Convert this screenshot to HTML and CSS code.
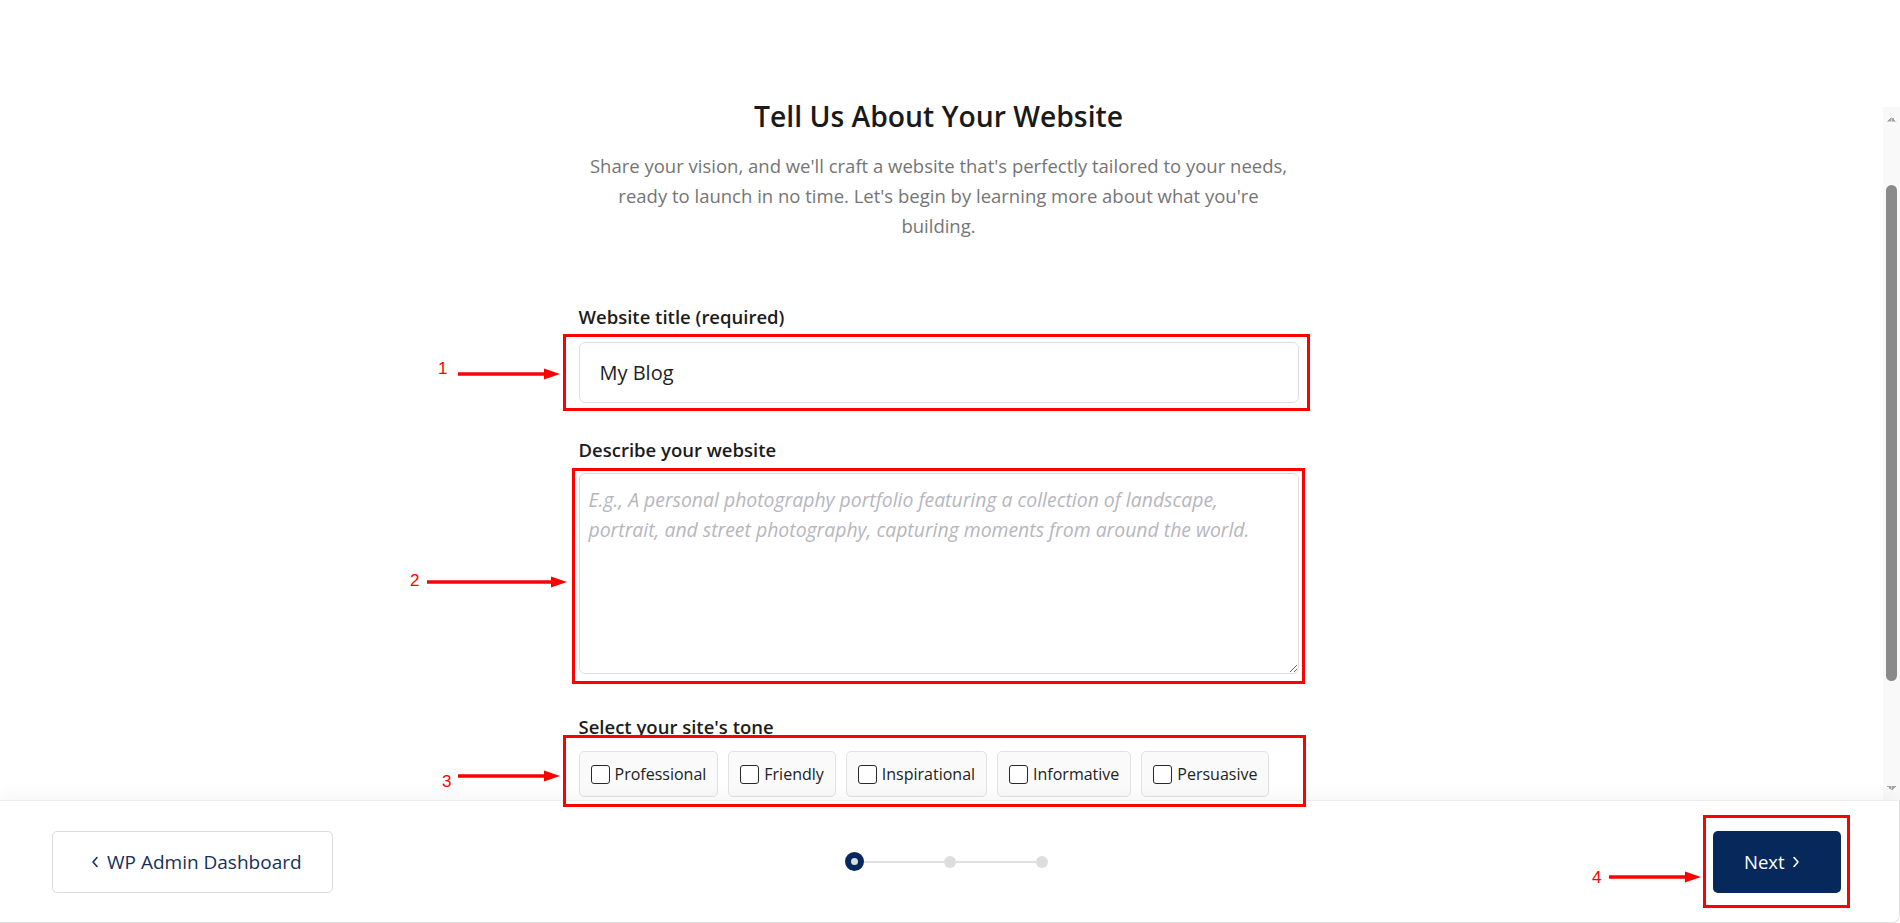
FILE: index.html
```html
<!DOCTYPE html>
<html lang="en">
<head>
<meta charset="utf-8">
<title>Tell Us About Your Website</title>
<link rel="stylesheet" href="styles.css">
</head>
<body>
<div class="app">
  <div class="main">
    <main class="page">
      <div class="content">
        <h1 class="title">Tell Us About Your Website</h1>
        <p class="lead">Share your vision, and we'll craft a website that's perfectly tailored to your needs, ready to launch in no time. Let's begin by learning more about what you're building.</p>

        <form class="form">
          <div class="field">
            <label class="label" for="site-title">Website title (required)</label>
            <input class="input" id="site-title" type="text" value="My Blog">
          </div>

          <div class="field field-desc">
            <label class="label" for="site-desc">Describe your website</label>
            <textarea class="textarea" id="site-desc" placeholder="E.g., A personal photography portfolio featuring a collection of landscape, portrait, and street photography, capturing moments from around the world."></textarea>
          </div>

          <div class="field field-tone">
            <span class="label">Select your site's tone</span>
            <div class="tones">
              <label class="tone"><input type="checkbox" class="check"><span>Professional</span></label>
              <label class="tone"><input type="checkbox" class="check"><span>Friendly</span></label>
              <label class="tone"><input type="checkbox" class="check"><span>Inspirational</span></label>
              <label class="tone"><input type="checkbox" class="check"><span>Informative</span></label>
              <label class="tone"><input type="checkbox" class="check"><span>Persuasive</span></label>
            </div>
          </div>
        </form>
      </div>
    </main>

    <div class="vscroll" aria-hidden="true">
      <div class="sb-btn sb-up"></div>
      <div class="sb-track"><div class="sb-thumb"></div></div>
      <div class="sb-btn sb-down"></div>
    </div>
  </div>

  <footer class="footer">
    <div class="footer-left">
      <button class="btn-back" type="button">
        <svg class="chev" width="10" height="14" viewBox="0 0 10 14"><polyline points="7,2.5 3,7 7,11.5" fill="none" stroke="currentColor" stroke-width="1.6" stroke-linecap="round" stroke-linejoin="round"/></svg>
        <span>WP Admin Dashboard</span>
      </button>
    </div>
    <div class="stepper">
      <span class="dot dot-active"></span>
      <span class="step-line"></span>
      <span class="dot"></span>
      <span class="step-line"></span>
      <span class="dot"></span>
    </div>
    <div class="footer-right">
      <button class="btn-next" type="button">
        <span>Next</span>
        <svg class="chev" width="10" height="14" viewBox="0 0 10 14"><polyline points="3,2.5 7,7 3,11.5" fill="none" stroke="currentColor" stroke-width="1.6" stroke-linecap="round" stroke-linejoin="round"/></svg>
      </button>
    </div>
  </footer>

  <div class="annot-box box-1"></div>
  <div class="annot-box box-2"></div>
  <div class="annot-box box-3"></div>
  <div class="annot-box box-4"></div>

  <svg class="arrow arrow-1" width="102" height="12" viewBox="0 0 102 12"><line x1="0" y1="6" x2="88" y2="6" stroke="#f00" stroke-width="3.5"/><polygon points="86,0.5 102,6 86,11.5" fill="#f00"/></svg>
  <svg class="arrow arrow-2" width="140" height="12" viewBox="0 0 140 12"><line x1="0" y1="6" x2="126" y2="6" stroke="#f00" stroke-width="3.5"/><polygon points="124,0.5 140,6 124,11.5" fill="#f00"/></svg>
  <svg class="arrow arrow-3" width="102" height="12" viewBox="0 0 102 12"><line x1="0" y1="6" x2="88" y2="6" stroke="#f00" stroke-width="3.5"/><polygon points="86,0.5 102,6 86,11.5" fill="#f00"/></svg>
  <svg class="arrow arrow-4" width="92" height="12" viewBox="0 0 92 12"><line x1="0" y1="6" x2="78" y2="6" stroke="#f00" stroke-width="3.5"/><polygon points="76,0.5 92,6 76,11.5" fill="#f00"/></svg>

  <span class="annot-num num-1">1</span>
  <span class="annot-num num-2">2</span>
  <span class="annot-num num-3">3</span>
  <span class="annot-num num-4">4</span>
</div>
</body>
</html>
```

FILE: styles.css
```css
* { box-sizing: border-box; }

html, body {
  margin: 0;
  padding: 0;
  height: 100%;
  overflow: hidden;
  background: #ffffff;
}

body {
  font-family: "Open Sans", "Noto Sans", "Liberation Sans", sans-serif;
  color: #1c1c1c;
}

.app {
  position: relative;
  height: 923px;
  display: flex;
  flex-direction: column;
}

.main {
  flex: 0 0 800px;
  height: 800px;
  display: flex;
  background: #ffffff;
}

.page {
  flex: 1 1 auto;
  overflow: hidden;
}

/* scrollbar column */
.vscroll {
  width: 17px;
  flex: 0 0 17px;
  margin-top: 107px;
  display: flex;
  flex-direction: column;
  background: #f9f9f9;
}

.sb-btn {
  height: 17px;
  flex: 0 0 17px;
  background-repeat: no-repeat;
  background-size: 4.5px 4.5px;
}

.sb-up {
  background-image:
    linear-gradient(to bottom right, transparent 50%, #a3a3a3 50%),
    linear-gradient(to bottom left, transparent 50%, #a3a3a3 50%);
  background-position: 4px 10px, 8.5px 10px;
}

.sb-down {
  background-image:
    linear-gradient(to top right, transparent 50%, #a3a3a3 50%),
    linear-gradient(to top left, transparent 50%, #a3a3a3 50%);
  background-position: 4px 3px, 8.5px 3px;
}

.sb-track {
  flex: 1 1 auto;
  padding: 0 3px;
}

.sb-thumb {
  margin-top: 61px;
  height: 496px;
  border-radius: 6px;
  background: #8a8a8a;
}

.content {
  padding: 97px 6px 0 0;
  display: flex;
  flex-direction: column;
  align-items: center;
}

.title {
  margin: 0;
  font-size: 28.3px;
  line-height: 38px;
  font-weight: 600;
  color: #1a1a1a;
  text-align: center;
}

.lead {
  margin: 16px 0 0;
  max-width: 708px;
  font-size: 18.5px;
  line-height: 30px;
  color: #757575;
  text-align: center;
}

.form {
  width: 720px;
  margin-top: 64px;
  display: flex;
  flex-direction: column;
}

.field {
  display: flex;
  flex-direction: column;
}

.field-desc { margin-top: 35px; }
.field-tone { margin-top: 41px; }

.label {
  font-size: 18.5px;
  line-height: 24px;
  font-weight: 600;
  color: #1c1c1c;
}

.input {
  margin-top: 13px;
  height: 61px;
  padding: 0 20px;
  border: 1px solid #dedede;
  border-radius: 6px;
  font-family: inherit;
  font-size: 20px;
  color: #1e1e1e;
  background: #ffffff;
  outline: none;
}

.textarea {
  margin-top: 11px;
  height: 201px;
  padding: 11px 29px 10px 9px;
  border: 1px solid #dedede;
  border-radius: 6px;
  font-family: inherit;
  font-size: 19.4px;
  line-height: 30px;
  color: #1e1e1e;
  background: #ffffff;
  outline: none;
}

.textarea::placeholder {
  font-style: italic;
  color: #b6b6bd;
}

.tones {
  margin-top: 12px;
  display: flex;
  gap: 10px;
}

.tone {
  height: 46px;
  padding: 0 11px;
  display: flex;
  align-items: center;
  gap: 5px;
  border: 1px solid #e2e2e2;
  border-radius: 5px;
  background: #fafafa;
  font-size: 16px;
  color: #222222;
}

.check {
  appearance: none;
  -webkit-appearance: none;
  margin: 0;
  width: 19px;
  height: 19px;
  border: 1.5px solid #2a2a2a;
  border-radius: 3px;
  background: #ffffff;
}

/* footer */
.footer {
  position: relative;
  z-index: 1;
  flex: 0 0 123px;
  height: 123px;
  display: grid;
  grid-template-columns: 1fr auto 1fr;
  align-items: center;
  padding: 0 58px 0 52px;
  background: #ffffff;
  border-top: 1px solid #ededed;
  border-bottom: 1px solid #e2e2e2;
  border-right: 1px solid #e2e2e2;
  border-bottom-right-radius: 8px;
  box-shadow: 0 -6px 16px rgba(0, 0, 0, 0.035);
}

.footer-left { display: flex; justify-content: flex-start; }
.footer-right { display: flex; justify-content: flex-end; }

.btn-back {
  width: 281px;
  height: 62px;
  padding: 0 0 0 37px;
  display: flex;
  align-items: center;
  gap: 7px;
  border: 1px solid #dcdcdc;
  border-radius: 5px;
  background: #ffffff;
  color: #15305c;
  font-family: inherit;
  font-size: 19px;
}

.btn-next {
  width: 128px;
  height: 62px;
  padding: 0 0 0 31px;
  display: flex;
  align-items: center;
  gap: 6px;
  border: none;
  border-radius: 5px;
  background: #06285a;
  color: #ffffff;
  font-family: inherit;
  font-size: 18.5px;
  font-weight: 500;
}

.chev { display: block; }

.stepper {
  display: flex;
  align-items: center;
}

.dot {
  width: 12px;
  height: 12px;
  border-radius: 50%;
  background: #dddddd;
}

.dot-active {
  width: 19px;
  height: 19px;
  border: 6px solid #06285a;
  background: #d9dde4;
}

.step-line {
  width: 80px;
  height: 2px;
  background: #e0e0e0;
}

/* screenshot annotations (overlay) */
.annot-box {
  position: absolute;
  border: 3px solid #ff0000;
  pointer-events: none;
  z-index: 5;
}
.box-1 { left: 563px; top: 334px; width: 747px; height: 77px; }
.box-2 { left: 572px; top: 468px; width: 733px; height: 216px; }
.box-3 { left: 563px; top: 735px; width: 743px; height: 72px; }
.box-4 { left: 1703px; top: 815px; width: 147px; height: 93px; }

.arrow {
  position: absolute;
  z-index: 5;
}
.arrow-1 { left: 458px; top: 368px; }
.arrow-2 { left: 427px; top: 576px; }
.arrow-3 { left: 458px; top: 770px; }
.arrow-4 { left: 1609px; top: 871px; }

.annot-num {
  position: absolute;
  z-index: 5;
  font-family: "Liberation Sans", sans-serif;
  font-size: 17px;
  line-height: 17px;
  color: #ff0000;
}
.num-1 { left: 438px; top: 360px; }
.num-2 { left: 410px; top: 572px; }
.num-3 { left: 442px; top: 773px; }
.num-4 { left: 1592px; top: 869px; }
```
